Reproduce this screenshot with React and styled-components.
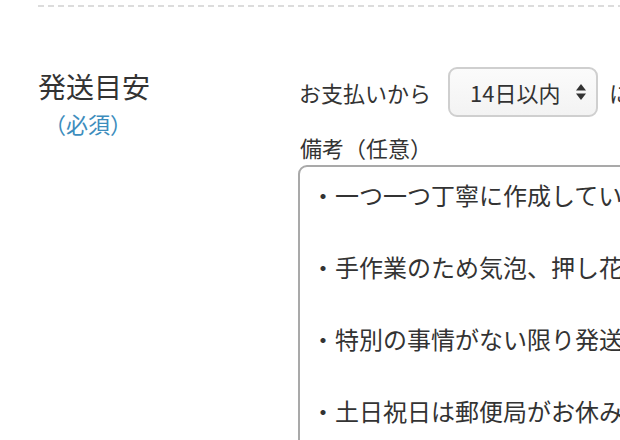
import React from "react";
import styled, { createGlobalStyle } from "styled-components";

const GlobalStyle = createGlobalStyle`
  html, body {
    margin: 0;
    padding: 0;
    background: #fff;
    overflow: hidden;
  }
  body {
    font-family: "Noto Sans CJK JP", "Noto Sans", sans-serif;
    color: #333;
  }
`;

const Page = styled.div`
  width: 620px;
  height: 440px;
  overflow: hidden;
  padding-top: 5px;
  box-sizing: border-box;
`;

const Divider = styled.div`
  margin-left: 38px;
  height: 2px;
  background: repeating-linear-gradient(
    to right,
    #dcdcdc 0 6px,
    transparent 6px 10px
  );
`;

const Section = styled.section`
  display: flex;
  padding-top: 60px;
`;

const LabelCol = styled.div`
  width: 298px;
  flex-shrink: 0;
  padding-left: 38px;
  box-sizing: border-box;
`;

const Label = styled.h3`
  margin: 0;
  font-size: 28px;
  font-weight: 400;
  line-height: 38px;
`;

const Required = styled.div`
  margin-top: 2px;
  margin-left: 6px;
  font-size: 22px;
  line-height: 32px;
  color: #3d8dbd;
`;

const FieldCol = styled.div`
  display: flex;
  flex-direction: column;
  flex-shrink: 0;
`;

const InlineRow = styled.div`
  display: flex;
  align-items: center;
  gap: 17px;
  padding-left: 1px;
  font-size: 22px;
  white-space: nowrap;
`;

const SelectBox = styled.div`
  display: flex;
  align-items: center;
  justify-content: space-between;
  gap: 10px;
  width: 150px;
  height: 50px;
  box-sizing: border-box;
  padding: 0 9px 0 20px;
  border: 2px solid #cfcfcf;
  border-radius: 9px;
  background: linear-gradient(#fbfbfb, #f3f3f3);
  font-size: 22px;
  color: #333;
`;

const After = styled.span`
  margin-left: -6px;
`;

const NoteLabel = styled.div`
  margin-top: 15px;
  padding-left: 2px;
  font-size: 22px;
  line-height: 31px;
  white-space: nowrap;
`;

const NoteArea = styled.textarea`
  margin-top: 2px;
  width: 640px;
  height: 420px;
  box-sizing: border-box;
  padding: 10px 11px;
  border: 2px solid #a9a9a9;
  border-radius: 9px;
  resize: none;
  outline: none;
  overflow: hidden;
  white-space: pre;
  font-family: "Noto Sans CJK JP", "Noto Sans", sans-serif;
  font-size: 24px;
  line-height: 36px;
  color: #333;
  background: #fff;
`;

const SortIcon = () => (
  <svg width="12" height="18" viewBox="0 0 12 18" aria-hidden="true">
    <path d="M6 1 L11 7.5 H1 Z" fill="#333" />
    <path d="M6 17 L11 10.5 H1 Z" fill="#333" />
  </svg>
);

const notes = [
  "・一つ一つ丁寧に作成していますので、お届けまでお時間をいただきます。",
  "",
  "・手作業のため気泡、押し花の位置などに多少の個体差がございます。",
  "",
  "・特別の事情がない限り発送は3〜5日以内に行います。",
  "",
  "・土日祝日は郵便局がお休みのため発送は翌営業日となります。",
].join("\n");

export default function App() {
  return (
    <>
      <GlobalStyle />
      <Page>
        <Divider />
        <Section>
          <LabelCol>
            <Label>発送目安</Label>
            <Required>（必須）</Required>
          </LabelCol>
          <FieldCol>
            <InlineRow>
              <span>お支払いから</span>
              <SelectBox>
                <span>14日以内</span>
                <SortIcon />
              </SelectBox>
              <After>に発送</After>
            </InlineRow>
            <NoteLabel>備考（任意）</NoteLabel>
            <NoteArea readOnly wrap="off" defaultValue={notes} />
          </FieldCol>
        </Section>
      </Page>
    </>
  );
}
